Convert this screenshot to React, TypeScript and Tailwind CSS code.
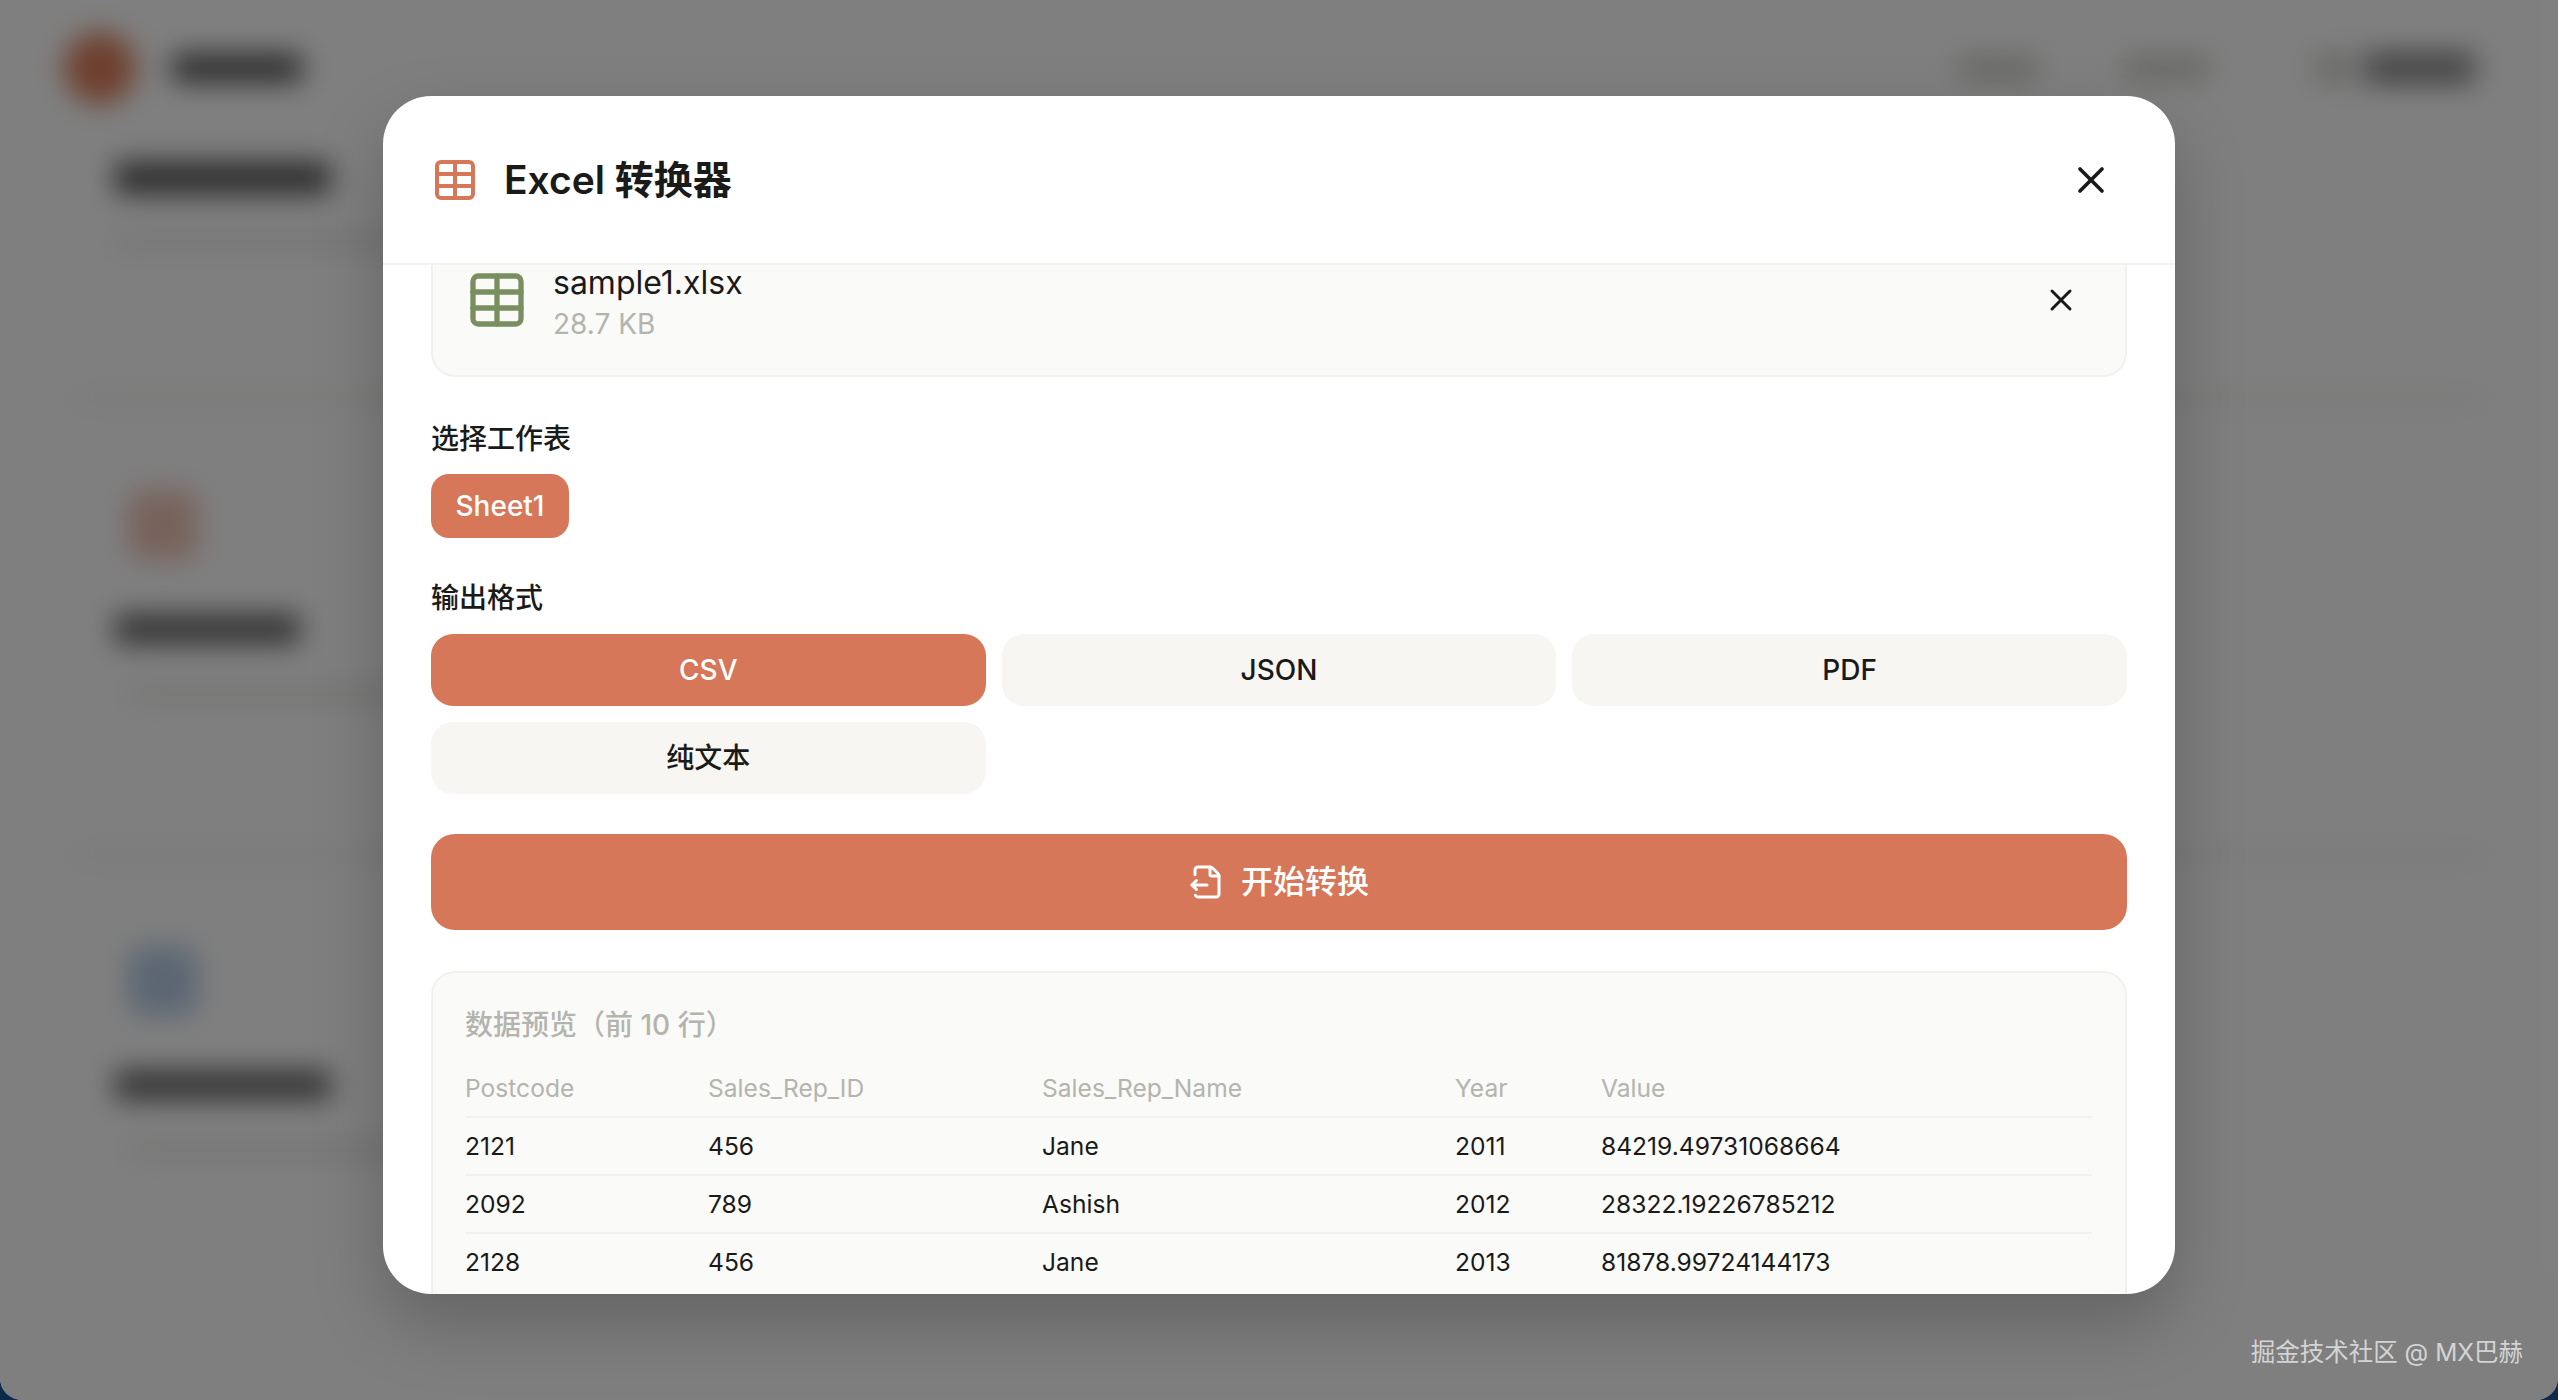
import { FileOutput, Table, X } from "lucide-react";

const rows = [
  ["2121", "456", "Jane", "2011", "84219.49731068664"],
  ["2092", "789", "Ashish", "2012", "28322.19226785212"],
  ["2128", "456", "Jane", "2013", "81878.99724144173"],
];

const headers = ["Postcode", "Sales_Rep_ID", "Sales_Rep_Name", "Year", "Value"];
const colWidths = ["w-[243px]", "w-[334px]", "w-[413px]", "w-[146px]", "w-[491px]"];

// the blurred page behind the dialog, only shapes are visible through the blur
function BackgroundPage() {
  return (
    <div className="h-full blur-[14px]">
      <div className="flex items-center pl-[64px] pr-[83px] pt-[32px]">
        <div className="size-[72px] rounded-full bg-[#dc7f5c]" />
        <div className="ml-[36px] h-[28px] w-[130px] rounded bg-[#555]" />
        <div className="ml-auto h-[24px] w-[80px] rounded bg-[#cfcfc9]" />
        <div className="ml-[87px] h-[24px] w-[85px] rounded bg-[#cfcfc9]" />
        <div className="ml-[105px] flex h-[32px] w-[160px] items-center gap-[10px]">
          <div className="h-full w-[40px] rounded bg-[#d6d6d2]" />
          <div className="h-full flex-1 rounded bg-[#8a8a8a]" />
        </div>
      </div>
      <div className="px-[115px] pt-[58px]">
        <div className="h-[32px] w-[215px] rounded bg-[#555]" />
        <div className="mt-[42px] h-[12px] w-[560px] rounded bg-[#e2e2e0]" />
      </div>
      <div className="mx-[70px] mt-[148px] border-t-[6px] border-[#e8e8e4]" />
      <BackgroundCard iconClass="bg-[#efc4b6]" titleWidth="w-[185px]" />
      <div className="mx-[70px] mt-[152px] border-t-[6px] border-[#e8e8e4]" />
      <BackgroundCard iconClass="bg-[#b7cde6]" titleWidth="w-[215px]" />
    </div>
  );
}

function BackgroundCard({ iconClass, titleWidth }: { iconClass: string; titleWidth: string }) {
  return (
    <div className="px-[128px] pt-[88px]">
      <div className={`size-[70px] rounded-2xl ${iconClass}`} />
      <div className={`-ml-[13px] mt-[54px] h-[30px] rounded bg-[#666] ${titleWidth}`} />
      <div className="mt-[44px] h-[12px] w-[560px] rounded bg-[#e2e2e0]" />
    </div>
  );
}

function FormatButton({ label, active }: { label: string; active?: boolean }) {
  return (
    <button
      className={`flex h-[72px] items-center justify-center rounded-[22px] text-[28px] font-medium ${
        active ? "bg-[#d6775a] text-white" : "bg-[#f7f6f3] text-[#1a1a18]"
      }`}
    >
      {label}
    </button>
  );
}

export default function App() {
  return (
    <div
      className="relative h-[1400px] w-[2558px] overflow-hidden bg-[#0c2a4a] text-[#1a1a18]"
      style={{ fontFamily: 'Inter, "Noto Sans CJK SC", sans-serif' }}
    >
      <div className="relative h-full overflow-hidden rounded-b-[22px] bg-white">
        <BackgroundPage />

        <div className="absolute inset-0 flex items-start justify-center bg-black/50 pt-[96px]">
          <div className="flex h-[1198px] w-[1792px] flex-col overflow-hidden rounded-[48px] bg-white shadow-[0_30px_70px_rgba(0,0,0,0.22)]">
            <div className="flex h-[169px] shrink-0 items-center border-b-2 border-[#f1f1ee] pl-[48px] pr-[62px]">
              <Table className="size-[48px] text-[#d6775a]" strokeWidth={2} />
              <h2 className="ml-[25px] mt-[2px] text-[39px] font-semibold">Excel 转换器</h2>
              <button className="ml-auto">
                <X className="size-[44px]" strokeWidth={2} />
              </button>
            </div>

            <div className="min-h-0 flex-1 overflow-hidden px-[48px]">
              <div className="-mt-[42px] flex h-[154px] items-center rounded-[24px] border-2 border-[#f1f1ee] bg-[#fafaf8] pl-[32px] pr-[46px]">
                <Table className="size-[64px] text-[#7a8f5f]" strokeWidth={2} />
                <div className="ml-[24px] mt-[8px]">
                  <div className="text-[32px] leading-[34px]">sample1.xlsx</div>
                  <div className="mt-[5px] text-[28px] leading-[38px] text-[#b4b4ae]">28.7 KB</div>
                </div>
                <button className="ml-auto">
                  <X className="size-[36px]" strokeWidth={2} />
                </button>
              </div>

              <div className="mt-[43px] text-[28px] font-medium leading-[38px]">选择工作表</div>
              <button className="mt-[16px] flex h-[64px] w-[138px] items-center justify-center rounded-[18px] bg-[#d6775a] text-[28px] font-medium text-white">
                Sheet1
              </button>

              <div className="mt-[41px] text-[28px] font-medium leading-[38px]">输出格式</div>
              <div className="mt-[17px] grid grid-cols-3 gap-[16px]">
                <FormatButton label="CSV" active />
                <FormatButton label="JSON" />
                <FormatButton label="PDF" />
                <FormatButton label="纯文本" />
              </div>

              <button className="mt-[40px] flex h-[96px] w-full items-center justify-center gap-[16px] rounded-[24px] bg-[#d6775a] text-[32px] font-medium text-white">
                <FileOutput className="size-[36px]" strokeWidth={2} />
                开始转换
              </button>

              <div className="mt-[41px] rounded-[24px] border-2 border-[#f1f1ee] bg-[#fafaf8] px-[32px] pb-[120px] pt-[32px]">
                <div className="text-[28px] font-medium leading-[40px] text-[#b4b4ae]">数据预览（前 10 行）</div>
                <table className="mt-[16px] w-[1627px] table-fixed border-collapse text-left text-[24.6px]">
                  <thead>
                    <tr className="h-[56px] border-b-2 border-[#f1f1ee] text-[#b4b4ae]">
                      {headers.map((h, i) => (
                        <th key={h} className={`p-0 font-normal ${colWidths[i]}`}>
                          {h}
                        </th>
                      ))}
                    </tr>
                  </thead>
                  <tbody>
                    {rows.map((row, r) => (
                      <tr key={row[0]} className={r < rows.length - 1 ? "h-[58px] border-b-2 border-[#f1f1ee]" : "h-[58px]"}>
                        {row.map((cell, i) => (
                          <td key={i} className="p-0">
                            {cell}
                          </td>
                        ))}
                      </tr>
                    ))}
                  </tbody>
                </table>
              </div>
            </div>
          </div>

          <div className="absolute bottom-[33px] right-[35px] text-[24.5px] leading-[30px] text-[#d4d4d4]">
            掘金技术社区 @ MX巴赫
          </div>
        </div>
      </div>
    </div>
  );
}
